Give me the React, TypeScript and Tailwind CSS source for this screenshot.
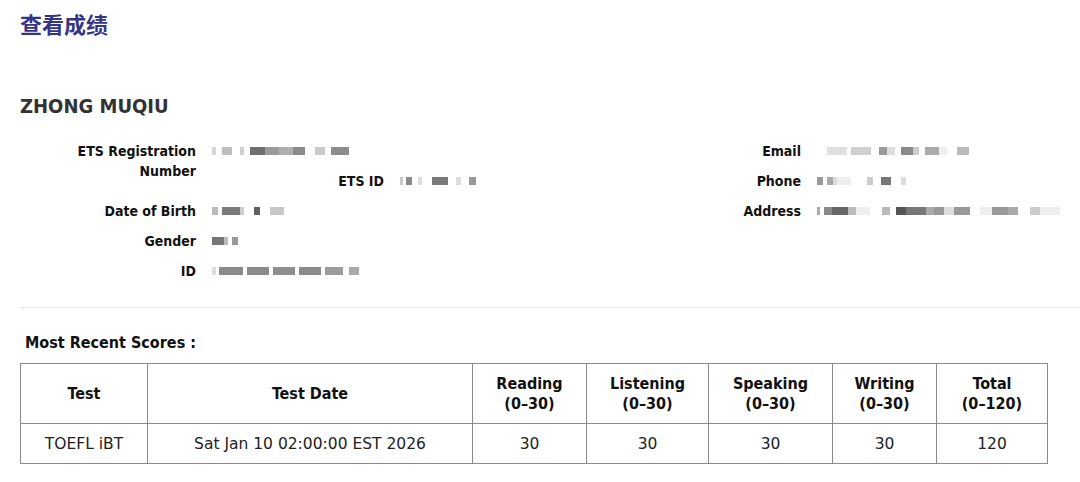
import React from "react";

type Seg = [number, string];

// mosaic blocks standing in for the blurred personal data
const masked: Record<string, Seg[]> = {
  etsReg: [
    [4, "#d6d6d6"], [6, ""], [10, "#bdbdbd"], [8, ""], [4, "#cfcfcf"], [6, ""],
    [15, "#6f6f6f"], [14, "#9a9a9a"], [14, "#b0b0b0"], [12, "#8a8a8a"], [10, ""],
    [10, "#cccccc"], [6, ""], [18, "#8c8c8c"],
  ],
  etsId: [
    [3, "#cccccc"], [3, ""], [6, "#8a8a8a"], [6, ""], [4, "#dddddd"], [10, ""],
    [16, "#7a7a7a"], [8, ""], [5, "#dddddd"], [8, ""], [7, "#999999"],
  ],
  dob: [
    [6, "#bbbbbb"], [4, ""], [18, "#7a7a7a"], [4, "#cccccc"], [10, ""],
    [6, "#5f5f5f"], [10, ""], [14, "#c8c8c8"],
  ],
  gender: [[12, "#777777"], [4, "#bbbbbb"], [4, ""], [6, "#999999"]],
  id: [
    [4, "#dddddd"], [3, ""], [24, "#8a8a8a"], [4, ""], [22, "#8a8a8a"], [4, ""],
    [22, "#8f8f8f"], [4, ""], [22, "#8a8a8a"], [4, ""], [18, "#9c9c9c"], [6, ""],
    [10, "#aaaaaa"],
  ],
  email: [
    [10, ""], [20, "#e0e0e0"], [4, ""], [20, "#d0d0d0"], [8, ""], [8, "#9a9a9a"],
    [8, "#dddddd"], [6, ""], [12, "#8a8a8a"], [6, "#cccccc"], [6, ""],
    [14, "#ababab"], [8, "#eeeeee"], [10, ""], [12, "#bbbbbb"],
  ],
  phone: [
    [6, "#9a9a9a"], [4, ""], [6, "#aaaaaa"], [4, "#dddddd"], [14, "#eeeeee"],
    [16, ""], [6, "#cccccc"], [8, ""], [10, "#777777"], [10, ""], [5, "#dddddd"],
  ],
  address: [
    [3, "#aaaaaa"], [4, ""], [8, "#8a8a8a"], [16, "#666666"], [8, "#bbbbbb"],
    [14, "#eeeeee"], [12, ""], [8, "#bbbbbb"], [6, ""], [10, "#555555"],
    [20, "#777777"], [8, "#aaaaaa"], [10, "#999999"], [10, "#dddddd"],
    [16, "#999999"], [10, ""], [12, "#eeeeee"], [16, "#999999"], [10, "#aaaaaa"],
    [12, ""], [10, "#cccccc"], [20, "#eeeeee"],
  ],
};

const Masked: React.FC<{ segs: Seg[] }> = ({ segs }) => (
  <div className="flex h-5 items-center whitespace-nowrap">
    {segs.map(([w, c], i) => (
      <span
        key={i}
        className="inline-block h-[8px] shrink-0"
        style={{ width: w, background: c || "transparent" }}
      />
    ))}
  </div>
);

const Label: React.FC<{ children: React.ReactNode; className?: string }> = ({
  children,
  className = "",
}) => (
  <div
    className={`py-[5px] text-right text-[14px] font-bold leading-5 text-[#111] ${className}`}
  >
    {children}
  </div>
);

const Value: React.FC<{ segs: Seg[]; className?: string }> = ({
  segs,
  className = "",
}) => (
  <div className={`py-[5px] ${className}`}>
    <Masked segs={segs} />
  </div>
);

const cols = [
  { w: "w-[127px]", head: ["Test"], val: "TOEFL iBT" },
  { w: "w-[325px]", head: ["Test Date"], val: "Sat Jan 10 02:00:00 EST 2026" },
  { w: "w-[114px]", head: ["Reading", "(0–30)"], val: "30" },
  { w: "w-[122px]", head: ["Listening", "(0–30)"], val: "30" },
  { w: "w-[124px]", head: ["Speaking", "(0–30)"], val: "30" },
  { w: "w-[104px]", head: ["Writing", "(0–30)"], val: "30" },
  { w: "w-[111px]", head: ["Total", "(0–120)"], val: "120" },
];

const bold = "font-['DejaVu_Sans_Condensed','DejaVu_Sans',sans-serif]";

export default function App() {
  return (
    <div className="min-h-[482px] w-[1080px] overflow-hidden bg-white font-['DejaVu_Sans',sans-serif]">
      <div className="pl-5">
        <h1 className="pt-2 font-['Noto_Sans_CJK_SC',sans-serif] text-[22px] font-bold leading-[30px] text-[#35348a]">
          查看成绩
        </h1>

        <h2 className={`mt-[54px] text-[20px] font-bold leading-7 text-[#333] ${bold}`}>
          ZHONG MUQIU
        </h2>

        <div
          className={`mt-4 grid grid-cols-[176px_100px_56px_300px_85px_1fr] grid-rows-[repeat(5,30px)] gap-x-4 ${bold}`}
        >
          <Label className="row-span-2">
            ETS Registration
            <br />
            Number
          </Label>
          <Value segs={masked.etsReg} className="col-span-2" />
          <div />
          <Label>Email</Label>
          <Value segs={masked.email} />

          <div />
          <Label>ETS ID</Label>
          <Value segs={masked.etsId} />
          <Label>Phone</Label>
          <Value segs={masked.phone} />

          <Label>Date of Birth</Label>
          <Value segs={masked.dob} className="col-span-3" />
          <Label>Address</Label>
          <Value segs={masked.address} />

          <Label>Gender</Label>
          <Value segs={masked.gender} className="col-span-5" />

          <Label>ID</Label>
          <Value segs={masked.id} className="col-span-5" />
        </div>

        <div className="mt-[21px] border-t border-[#e6e6e6]" />

        <p className={`mt-6 pl-[5px] text-[16px] font-bold leading-[22px] text-[#111] ${bold}`}>
          Most Recent Scores :
        </p>

        <table className="mt-[9px] w-[1027px] table-fixed border-collapse">
          <colgroup>
            {cols.map((c, i) => (
              <col key={i} className={c.w} />
            ))}
          </colgroup>
          <thead>
            <tr>
              {cols.map((c, i) => (
                <th
                  key={i}
                  className={`h-[60px] border border-[#8a8a8a] p-0 text-center text-[16px] font-bold leading-5 text-[#111] ${bold}`}
                >
                  {c.head.map((t, j) => (
                    <div key={j}>{t}</div>
                  ))}
                </th>
              ))}
            </tr>
          </thead>
          <tbody>
            <tr>
              {cols.map((c, i) => (
                <td
                  key={i}
                  className="h-10 border border-[#8a8a8a] p-0 text-center text-[15.5px] leading-5 text-[#222]"
                >
                  {c.val}
                </td>
              ))}
            </tr>
          </tbody>
        </table>
      </div>
    </div>
  );
}
